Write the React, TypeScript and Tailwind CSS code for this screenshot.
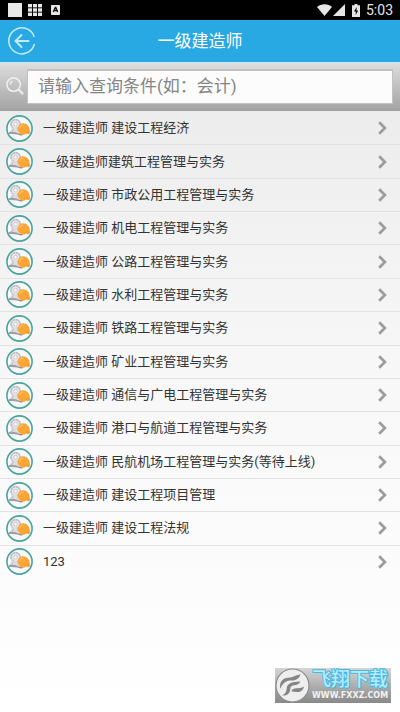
import React, { useState } from 'react';

const SUBJECTS = [
  '一级建造师 建设工程经济',
  '一级建造师建筑工程管理与实务',
  '一级建造师 市政公用工程管理与实务',
  '一级建造师 机电工程管理与实务',
  '一级建造师 公路工程管理与实务',
  '一级建造师 水利工程管理与实务',
  '一级建造师 铁路工程管理与实务',
  '一级建造师 矿业工程管理与实务',
  '一级建造师 通信与广电工程管理与实务',
  '一级建造师 港口与航道工程管理与实务',
  '一级建造师 民航机场工程管理与实务(等待上线)',
  '一级建造师 建设工程项目管理',
  '一级建造师 建设工程法规',
  '123',
];

const StatusBar: React.FC = () => (
  <div className="flex h-5 items-center justify-between bg-black pl-2 pr-[7px] text-[#e6e6e6]">
    <div className="flex items-center gap-[6px]">
      <span className="h-[14px] w-[14px] bg-[#e8e8e8]" />
      <svg width="14" height="12" viewBox="0 0 14 12" fill="currentColor">
        {[0, 5, 10].map((x) => [0, 4.3, 8.6].map((y) => (
          <rect key={`${x}-${y}`} x={x} y={y} width="4" height="3.4" />
        )))}
      </svg>
      <svg className="ml-[3px]" width="9" height="10" viewBox="0 0 9 10">
        <rect width="9" height="10" rx="0.8" fill="#e6e6e6" />
        <path d="M2.3 7 4.3 2.4h.5L6.7 7M3.1 5.5h2.8" fill="none" stroke="#111" strokeWidth="1.3" />
      </svg>
    </div>
    <div className="flex items-center">
      <svg width="15" height="12" viewBox="0 0 15 12" fill="currentColor">
        <path d="M0 3C4-.8 11-.8 15 3L7.5 12z" />
      </svg>
      <svg className="ml-px" width="12" height="12" viewBox="0 0 12 12" fill="currentColor">
        <path d="M12 0v12H0z" />
      </svg>
      <svg className="ml-[7px]" width="8" height="13" viewBox="0 0 8 13">
        <path d="M2.5 0h3v1.3H8V13H0V1.3h2.5z" fill="#e6e6e6" />
        <path d="M4.6 3 2 7.6h1.7V11L6.2 6.5H4.6z" fill="#111" />
      </svg>
      <span className="ml-[6px] text-[14px] leading-5">5:03</span>
    </div>
  </div>
);

const BackIcon: React.FC = () => (
  <svg width="28" height="28" viewBox="0 0 28 28" fill="none" stroke="#c4ebfc" strokeWidth="1.5" strokeLinecap="round">
    <path d="M26 9.3A13 13 0 1 0 26.3 17.5" />
    <path d="M20.5 14H8M13.5 8 7.5 14l6 6" strokeWidth="1.9" />
  </svg>
);

const SearchIcon: React.FC = () => (
  <svg width="18" height="18" viewBox="0 0 18 18" fill="none" stroke="#eeeeee" strokeLinecap="round">
    <circle cx="7.6" cy="7.6" r="6.7" strokeWidth="1.6" />
    <path d="M12.8 12.8 16.5 16.5" strokeWidth="2.2" />
    <path d="M4.3 7A3.5 3.5 0 0 1 6 4.5" strokeWidth="1.5" />
  </svg>
);

// Hard hat with a gear behind it and a roll of drawings underneath
const HelmetIcon: React.FC = () => (
  <svg className="shrink-0" width="27" height="27" viewBox="0 0 27 27">
    <circle cx="13.5" cy="13.5" r="12.6" fill="#f7f8f8" stroke="#4aa39f" strokeWidth="1.6" />
    <circle cx="9.6" cy="9.2" r="4.6" fill="#e9e9ed" stroke="#bcbcc4" strokeWidth="1.7" strokeDasharray="2.6 .4" />
    <circle cx="9.6" cy="9.2" r="1.9" fill="#f8f8f8" stroke="#b6b6be" strokeWidth=".7" />
    <path d="M6 12.6 4 17l8.4 2 .4-5.4z" fill="#dcdce1" />
    <path d="m7.4 13.6-1.4 3.4" stroke="#b4b4bc" strokeWidth=".8" />
    <path d="M2.8 17.3c3-1 6.8-.2 11.6 1.6l-.5 1.2c-4-.7-8-.9-10.8-1z" fill="#9f9fa8" />
    <path d="m12 19.3 4-.4 1.4 1.2-3 .4z" fill="#8d8587" />
    <path d="M11.8 15.8c-.9-3.9 1.4-7.3 5-7.6 4.4-.3 7 3.5 7.1 8.1l.4 1.6-2 1.3-2.5-.6-1.6 1.2c-2.7.1-5.6-1.6-6.4-4z" fill="#faa637" />
    <path d="M13.6 12.9c.5-1.7 1.7-2.7 3.3-2.8" fill="none" stroke="#ffc067" strokeWidth="1.3" strokeLinecap="round" />
    <path d="M18.4 18.8c.8-2 2.8-2.4 4.8-1.4" fill="none" stroke="#e6932f" strokeWidth=".7" />
  </svg>
);

const Chevron: React.FC = () => (
  <svg className="shrink-0" width="9" height="14" viewBox="0 0 9 14" fill="none" stroke="#9c9c9c" strokeWidth="2.7">
    <path d="m1.2 1.2 5.7 5.8-5.7 5.8" />
  </svg>
);

const Watermark: React.FC = () => (
  <div className="absolute right-[9px] bottom-[9px] flex h-[35px] w-[116px] items-center gap-[2px] bg-gradient-to-b from-[#d6d6d6] to-[#898989]">
    <svg className="shrink-0" width="35" height="35" viewBox="0 0 35 35">
      <circle cx="17.5" cy="17.5" r="16.5" fill="#eeeeee" stroke="#8a8a8a" strokeWidth="1.2" />
      <path d="M5 21c-.5-7.4 2.6-11 8.2-11.2 5-.2 6.8-2.6 12.3-3.5-1.3 4.6-4.5 6.2-9.4 6.3-5.6 0-8.2 2.6-11.1 8.4z" fill="#858585" />
      <path d="M7 27.5c3.5-1.4 4.2-3.6 4.7-6.9.8-5 4-6.5 13.8-7-2.2 3.4-4.5 3.6-7.4 3.8-2.5.3-2.7 2.2-3 4.5-.6 4-3.8 6.3-8.1 5.6z" fill="#858585" />
      <path d="M16.3 23.2c1-2.4 2.7-2.9 5.2-3 2.2 0 5-.2 7.5-1.8-.5 3.6-3.2 5.7-7 5.6-2.2 0-4-.3-5.7-.8z" fill="#858585" />
    </svg>
    <div className="flex flex-col items-start whitespace-nowrap">
      <span className="text-[19px] leading-[21px] font-medium text-[#b4ecfb] [-webkit-text-stroke:2px_#4ab7e2] [paint-order:stroke_fill]">飞翔下载</span>
      <span className="font-['DejaVu_Sans'] text-[8px] leading-[12px] font-bold text-[#f2f2f2]">WWW.FXXZ.COM</span>
    </div>
  </div>
);

const App: React.FC = () => {
  const [query, setQuery] = useState('');

  const subjects = SUBJECTS.filter((name) => name.includes(query.trim()));

  return (
    <div className="relative flex min-h-screen flex-col bg-gradient-to-b from-[#e8e8e8] via-[#f7f7f7] to-white font-[Roboto,'Noto_Sans_CJK_SC',sans-serif]">
      <StatusBar />

      <header className="grid h-[43px] grid-cols-[44px_1fr_44px] items-center border-b border-[#c9eafa] bg-[#29a9e3]">
        <button type="button" aria-label="返回" className="pl-2">
          <BackIcon />
        </button>
        <h1 className="text-center text-[17px] leading-6 text-white">一级建造师</h1>
      </header>

      <form
        className="flex h-12 items-center border-b-2 border-[#a2a2a2] bg-gradient-to-b from-[#dedede] to-[#a5a5a5] pr-[7px] pl-[6px]"
        onSubmit={(e) => e.preventDefault()}
      >
        <label htmlFor="subject-search" aria-label="查询" className="w-[21px] shrink-0">
          <SearchIcon />
        </label>
        <input
          id="subject-search"
          type="text"
          value={query}
          onChange={(e) => setQuery(e.target.value)}
          placeholder="请输入查询条件(如：会计)"
          className="h-[35px] min-w-0 flex-1 border border-t-2 border-[#c2c2c2] bg-[#fcfcfc] px-[10px] pb-[2px] text-[17px] text-[#333333] outline-none placeholder:text-[#858585]"
        />
      </form>

      <ul className={`grid auto-rows-fr ${subjects.length === SUBJECTS.length ? 'min-h-[467px]' : ''}`}>
        {subjects.map((name) => (
          <li key={name} className="border-t border-[#e2e2e2] first:border-transparent">
            <button type="button" className="flex h-full min-h-8 w-full items-center pr-[13px] pl-[6px] text-left">
              <HelmetIcon />
              <span className="ml-[10px] flex-1 text-[13px] leading-5 text-[#333333]">{name}</span>
              <Chevron />
            </button>
          </li>
        ))}
      </ul>

      <Watermark />
    </div>
  );
};

export default App;
